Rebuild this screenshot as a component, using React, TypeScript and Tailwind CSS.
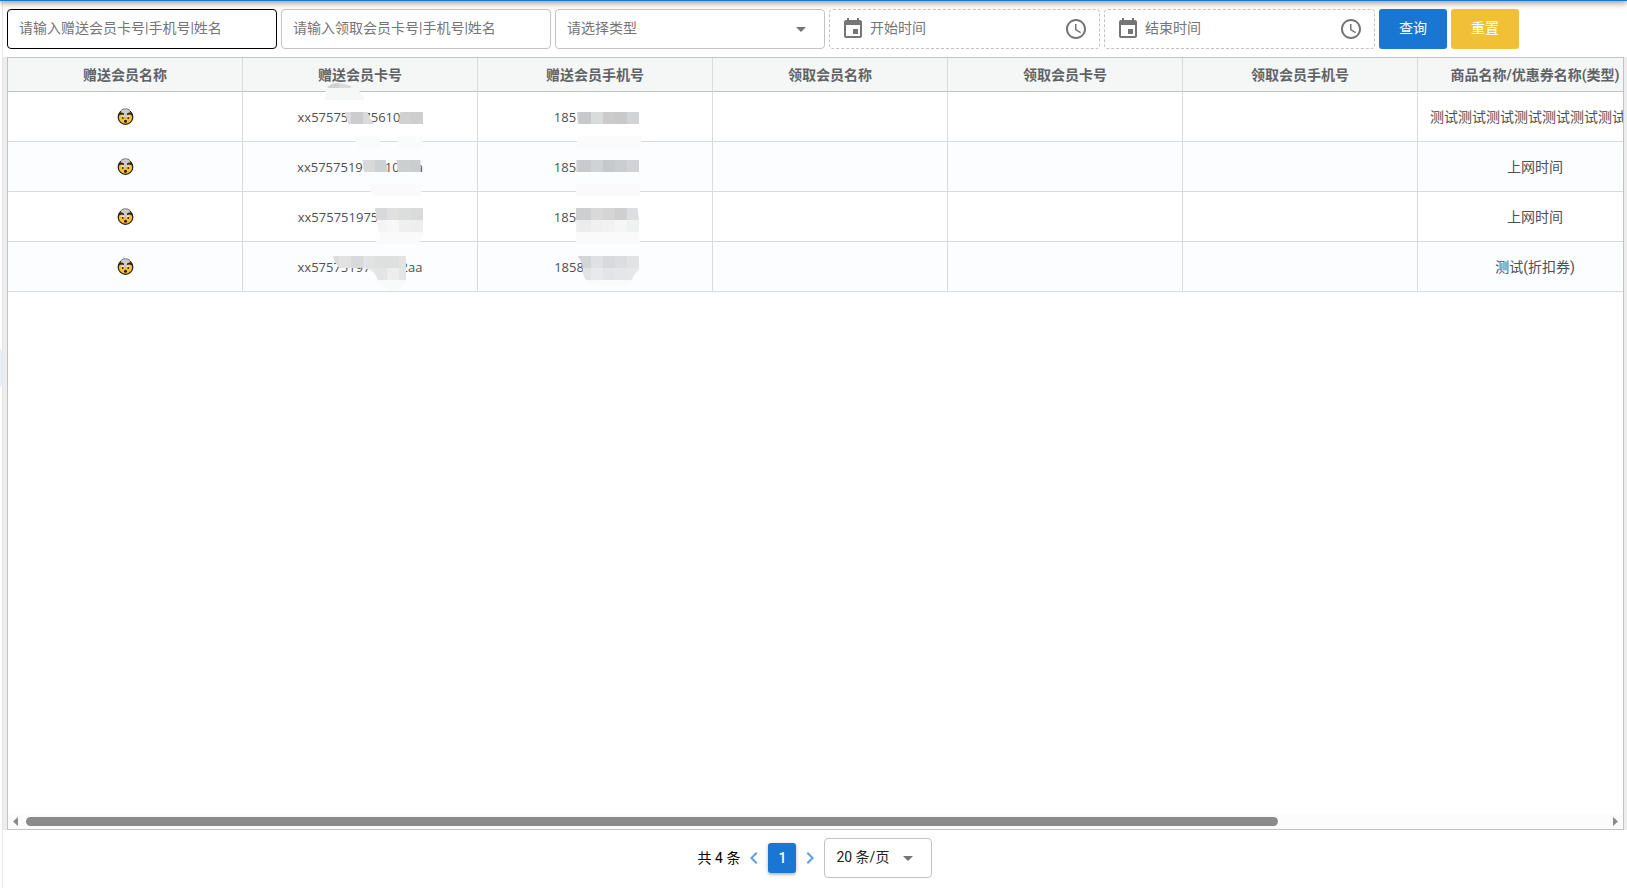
import { useState, type ReactNode } from "react";
import {
  MdAccessTime,
  MdArrowDropDown,
  MdChevronLeft,
  MdChevronRight,
  MdEvent,
} from "react-icons/md";
import { clsx } from "clsx";

// a number stands for a masked stretch of that width, in px
type Masked = (string | number)[];

type Row = {
  id: number;
  card: Masked;
  phone: Masked;
  goods: string;
};

const columns = [
  "赠送会员名称",
  "赠送会员卡号",
  "赠送会员手机号",
  "领取会员名称",
  "领取会员卡号",
  "领取会员手机号",
  "商品名称/优惠券名称(类型)",
];

const rows: Row[] = [
  {
    id: 1,
    card: ["xx57575", 15, "75610", 22],
    phone: ["185", 60],
    goods: "测试测试测试测试测试测试测试测试",
  },
  {
    id: 2,
    card: ["xx5757519", 22, "10", 16, "a"],
    phone: ["185", 60],
    goods: "上网时间",
  },
  { id: 3, card: ["xx575751975", 44], phone: ["185", 60], goods: "上网时间" },
  {
    id: 4,
    card: ["xx57575197", 30, "2aa"],
    phone: ["1858", 52],
    goods: "测试(折扣券)",
  },
];

const fieldClass =
  "h-10 w-full rounded border bg-white text-sm text-[#424242] outline-none placeholder:text-[#757575]";

function TextField({ label, active }: { label: string; active?: boolean }) {
  return (
    <input
      type="text"
      aria-label={label}
      placeholder={label}
      className={clsx(
        fieldClass,
        "px-[11px] pb-0.5",
        active ? "border-black" : "border-[#c2c2c2]",
      )}
    />
  );
}

function DateField({ label }: { label: string }) {
  return (
    <label className="flex h-10 w-full items-center gap-[5px] rounded border border-dashed border-[#c2c2c2] px-[11px]">
      <MdEvent className="size-6 shrink-0 text-[#757575]" />
      <input
        type="text"
        aria-label={label}
        placeholder={label}
        className="h-full min-w-0 flex-1 bg-transparent pb-0.5 text-sm outline-none placeholder:text-[#757575]"
      />
      <MdAccessTime className="size-6 shrink-0 text-[#757575]" />
    </label>
  );
}

function Field({ wide, children }: { wide?: boolean; children: ReactNode }) {
  return (
    <div className={clsx("relative min-w-0", wide ? "w-[271px]" : "w-[270px]")}>
      {children}
    </div>
  );
}

function MaskedText({ parts }: { parts: Masked }) {
  return (
    <span className="inline-flex font-['Open_Sans','Noto_Sans_CJK_SC',sans-serif] text-[13px] leading-5">
      {parts.map((part, i) =>
        typeof part === "string" ? (
          <span key={i}>{part}</span>
        ) : (
          <span key={i} style={{ width: part }} />
        ),
      )}
    </span>
  );
}

function Face() {
  return (
    <svg viewBox="0 0 34 34" className="size-[17px]" aria-hidden="true">
      <circle cx="17" cy="18" r="14.6" fill="#fcc02e" stroke="#1c1c1c" strokeWidth="2.4" />
      <path d="M9 9 Q6 4 11 3 Q14 1 17 2 Q21 1 24 4 Q28 6 24 10 L20 11 V15 L25 18 H9 L14 15 V11Z" fill="#c9cbcd" />
      <path d="M8 5 Q12 1 17 1.4 Q22 1 26 5" fill="none" stroke="#66696b" strokeWidth="1.6" />
      <path d="M4 10 Q9 8 14 11 V14 Q9 12 4 15Z M30 10 Q25 8 20 11 V14 Q25 12 30 15Z" fill="#2b2418" />
      <path d="M9 16.5 H14 M20 16.5 H25" stroke="#f5f5f5" strokeWidth="2" />
      <rect x="10" y="18" width="3" height="4" fill="#4a3510" />
      <rect x="21" y="18" width="3" height="4" fill="#4a3510" />
      <ellipse cx="17" cy="26.5" rx="3" ry="3.2" fill="#1c1c1c" />
    </svg>
  );
}

// mosaic blocks as [x, y, fill]; every block is 36 units wide and high
const blobs: { clip: string; blocks: [number, number, string][] }[] = [
  {
    clip: "M134 60 Q132 10 172 9 Q240 16 254 60Z",
    blocks: [
      [105, -12, "#d0d2d2"], [141, -12, "#d0d2d2"], [177, -12, "#d9dbdb"], [213, -12, "#f4f6f6"],
      [105, 24, "#f6f8f8"], [141, 24, "#f6f8f8"], [177, 24, "#f6f8f8"], [213, 24, "#f6f8f8"], [249, 24, "#f6f8f8"],
    ],
  },
  {
    clip: "M194 96 H262 Q270 116 282 132 H205Z",
    blocks: [[177, 96, "#dcdcde"], [213, 96, "#cccccf"], [249, 96, "#dadadb"]],
  },
  {
    clip: "M361 96 H429 V132 H356Z",
    blocks: [[321, 96, "#d6d6d6"], [357, 96, "#d0d0d1"], [393, 96, "#cececf"]],
  },
  {
    clip: "M222 168 H296 L304 204 H234Z M355 168 H429 L425 204 H350Z",
    blocks: [
      [213, 168, "#fafbfb"], [249, 168, "#fafbfb"], [285, 168, "#fafbfb"],
      [321, 168, "#fafbfb"], [357, 168, "#fafbfb"], [393, 168, "#fafbfb"],
    ],
  },
  {
    clip: "M247 240 H317 L324 276 H252Z M349 240 H422 V276 H354Z",
    blocks: [
      [213, 240, "#d8dada"], [249, 240, "#d8dada"], [285, 240, "#cdd1d3"],
      [321, 240, "#d2d4d4"], [357, 240, "#cbcfd0"], [393, 240, "#c9cdce"],
    ],
  },
  {
    clip: "M268 312 H424 V348 H276Z",
    blocks: [
      [249, 312, "#fafafa"], [285, 312, "#fafafa"], [321, 312, "#fafafa"], [357, 312, "#fafafa"], [393, 312, "#fafafa"],
    ],
  },
  {
    clip: "M285 384 H429 V456 Q426 480 412 492 H258 Q300 486 302 474 Q290 440 285 384Z",
    blocks: [
      [285, 384, "#d8d9da"], [321, 384, "#e0e0df"], [357, 384, "#dcdddd"], [393, 384, "#d9dada"],
      [285, 420, "#f4f4f4"], [321, 420, "#f7f7f7"], [357, 420, "#efefef"], [393, 420, "#eeeeee"],
      [249, 456, "#fafafa"], [285, 456, "#fafafa"], [321, 456, "#fafafa"], [357, 456, "#fafafa"], [393, 456, "#fafafa"],
    ],
  },
  {
    clip: "M159 528 H378 V600 Q368 632 334 634 Q300 622 286 584 Q276 568 250 564 H178 Q162 548 159 528Z",
    blocks: [
      [141, 528, "#dcdcde"], [177, 528, "#e2e2e2"], [213, 528, "#d8d9db"], [249, 528, "#e1e2e2"],
      [285, 528, "#dedfdf"], [321, 528, "#dedfdf"], [357, 528, "#e2e3e3"],
      [249, 564, "#e6e7e8"], [285, 564, "#e3e4e5"], [321, 564, "#ededed"], [357, 564, "#e4e5e6"],
      [285, 600, "#f9fafa"], [321, 600, "#f9fafa"], [357, 600, "#f9fafa"],
    ],
  },
  {
    clip: "M890 96 H1077 V132 H894Z",
    blocks: [
      [861, 96, "#d4d4d5"], [897, 96, "#c7c8ca"], [933, 96, "#d9dcdb"], [969, 96, "#cbcbcc"],
      [1005, 96, "#c9c9c9"], [1041, 96, "#d3d4d5"],
    ],
  },
  {
    clip: "M892 168 H1085 L1082 204 H892Z M888 312 H1080 V348 H888Z",
    blocks: [
      [861, 168, "#fafbfa"], [897, 168, "#fafbfa"], [933, 168, "#fafbfa"], [969, 168, "#fafbfa"],
      [1005, 168, "#fafbfa"], [1041, 168, "#fafbfa"], [1077, 168, "#fafbfa"],
      [861, 312, "#fafafa"], [897, 312, "#fafafa"], [933, 312, "#fafafa"], [969, 312, "#fafafa"],
      [1005, 312, "#fafafa"], [1041, 312, "#fafafa"], [1077, 312, "#fafafa"],
    ],
  },
  {
    clip: "M889 240 H1077 V276 H889Z",
    blocks: [
      [861, 240, "#cdcfd1"], [897, 240, "#c9cacd"], [933, 240, "#d0d3d4"], [969, 240, "#c6c9cb"],
      [1005, 240, "#cbcecf"], [1041, 240, "#d1d4d6"],
    ],
  },
  {
    clip: "M888 384 H1073 L1077 420 V456 L1082 492 H888Z",
    blocks: [
      [861, 384, "#cfd0d1"], [897, 384, "#cecfd0"], [933, 384, "#d9d9d9"], [969, 384, "#d5d5d5"],
      [1005, 384, "#cfcfcf"], [1041, 384, "#dcdedf"],
      [861, 420, "#efefef"], [897, 420, "#ececec"], [933, 420, "#f0f0f0"], [969, 420, "#f2f2f2"],
      [1005, 420, "#f6f6f5"], [1041, 420, "#f0f2f1"],
      [861, 456, "#fafafa"], [897, 456, "#fafafa"], [933, 456, "#fafafa"], [969, 456, "#fafafa"],
      [1005, 456, "#fafafa"], [1041, 456, "#fafafa"], [1077, 456, "#fafafa"],
    ],
  },
  {
    clip: "M893 528 H1077 V570 Q1062 580 1056 600 Q1040 618 1000 618 Q940 620 918 600 Q904 580 909 560 Q902 540 893 528Z",
    blocks: [
      [861, 528, "#d7d8da"], [897, 528, "#d4d5d8"], [933, 528, "#dfe0e2"], [969, 528, "#d8d9dc"],
      [1005, 528, "#dcdddf"], [1041, 528, "#e2e3e4"],
      [897, 564, "#e2e3e5"], [933, 564, "#e8e9eb"], [969, 564, "#e3e4e6"], [1005, 564, "#e5e6e8"], [1041, 564, "#e6e7e8"],
      [897, 600, "#f9fafa"], [933, 600, "#f9fafa"], [969, 600, "#f9fafa"], [1005, 600, "#f9fafa"], [1041, 600, "#f9fafa"],
    ],
  },
];

function Mosaic() {
  return (
    <svg
      viewBox="0 0 1140 660"
      shapeRendering="crispEdges"
      className="pointer-events-none absolute top-[22px] left-[272px] h-[220px] w-[380px]"
      aria-hidden="true"
    >
      {blobs.map((blob, i) => (
        <g key={i} clipPath={`url(#blob-${i})`}>
          <clipPath id={`blob-${i}`}>
            <path d={blob.clip} />
          </clipPath>
          {blob.blocks.map(([x, y, fill]) => (
            <rect key={`${x}-${y}`} x={x} y={y} width="36" height="36" fill={fill} />
          ))}
        </g>
      ))}
    </svg>
  );
}

function GiftTable() {
  const cell =
    "h-[50px] overflow-hidden border-r border-b border-[#d9dcde] px-3 text-center whitespace-nowrap";

  return (
    <div className="relative min-h-0 flex-1 overflow-hidden">
      <table className="w-[1645px] table-fixed border-separate border-spacing-0 text-sm text-[#4f5052]">
        <thead>
          <tr className="bg-[#f5f7f7]">
            {columns.map((column) => (
              <th
                key={column}
                className="h-[34px] w-[235px] border-r border-b border-r-[#d9dcde] border-b-[#bdc3c7] font-bold whitespace-nowrap text-[#606266]"
              >
                {column}
              </th>
            ))}
          </tr>
        </thead>
        <tbody>
          {rows.map((row) => (
            <tr key={row.id} className="even:bg-[#fcfdfe]">
              <td className={cell}>
                <span className="flex justify-center" role="img" aria-label="头像">
                  <Face />
                </span>
              </td>
              <td className={cell}>
                <MaskedText parts={row.card} />
              </td>
              <td className={cell}>
                <MaskedText parts={row.phone} />
              </td>
              <td className={cell} />
              <td className={cell} />
              <td className={cell} />
              <td className={cell}>{row.goods}</td>
            </tr>
          ))}
        </tbody>
      </table>
      <Mosaic />
    </div>
  );
}

function ScrollBar() {
  return (
    <div className="flex h-[15px] items-center gap-2 bg-[#fcfcfc] px-[5px]">
      <svg viewBox="0 0 5 9" className="h-[9px] w-[5px]" fill="#8b8b8b" aria-hidden="true">
        <path d="M5 0v9L0 4.5z" />
      </svg>
      <div className="flex-1">
        <div className="h-[9px] w-[79.3%] rounded-full bg-[#8b8b8b]" />
      </div>
      <svg viewBox="0 0 5 9" className="h-[9px] w-[5px]" fill="#8b8b8b" aria-hidden="true">
        <path d="M0 0v9l5-4.5z" />
      </svg>
    </div>
  );
}

export default function App() {
  const [type, setType] = useState("");
  const [pageSize, setPageSize] = useState("20");

  return (
    <div className="flex h-screen overflow-hidden bg-white font-[Roboto,'Noto_Sans_CJK_SC',sans-serif]">
      <div className="flex w-[3px] shrink-0 flex-col border-r border-[#e6e6e6] pt-[199px]">
        <div className="mt-[150px] h-[38px] bg-[#e8f0fd]" />
      </div>
      <main className="relative flex min-w-0 flex-1 flex-col">
        {/* lower edge of the app header, with its elevation shadow */}
        <div className="pointer-events-none absolute -top-[49px] right-0 -left-[3px] h-[50px] bg-[#1976d2] shadow-[0_2px_4px_-1px_rgba(0,0,0,0.2),0_4px_5px_rgba(0,0,0,0.14),0_1px_10px_rgba(0,0,0,0.12)]" />
        <form
          className="flex gap-1 px-1 pt-[9px] pb-2"
          onSubmit={(e) => e.preventDefault()}
        >
          <Field>
            <TextField label="请输入赠送会员卡号|手机号|姓名" active />
          </Field>
          <Field>
            <TextField label="请输入领取会员卡号|手机号|姓名" />
          </Field>
          <Field>
            <select
              aria-label="请选择类型"
              value={type}
              onChange={(e) => setType(e.target.value)}
              className="h-10 w-full appearance-none rounded border border-[#c2c2c2] bg-white px-[11px] pb-0.5 text-sm text-[#757575] outline-none"
            >
              <option value="">请选择类型</option>
              <option value="time">上网时间</option>
              <option value="coupon">折扣券</option>
            </select>
            <MdArrowDropDown className="pointer-events-none absolute top-2 right-3 size-6 text-[#757575]" />
          </Field>
          <Field wide>
            <DateField label="开始时间" />
          </Field>
          <Field wide>
            <DateField label="结束时间" />
          </Field>
          <button
            type="submit"
            className="relative h-10 w-[68px] shrink-0 rounded-[3px] bg-[#1976d2] pb-0.5 text-sm text-white"
          >
            查询
          </button>
          <button
            type="reset"
            className="relative h-10 w-[68px] shrink-0 rounded-[3px] bg-[#f2c037] pb-0.5 text-sm text-white"
          >
            重置
          </button>
        </form>

        <div className="flex min-h-0 flex-1 bg-[#ededed] pr-[3px] pl-1">
          <div className="flex min-w-0 flex-1 flex-col border border-[#bdc3c7] bg-white">
            <GiftTable />
            <ScrollBar />
          </div>
        </div>

        <nav className="flex items-center justify-center pt-2 pb-[10px] text-sm text-black">
          <span>共 4 条</span>
          <button type="button" aria-label="上一页" className="ml-0.5 text-[#5e9fe0]">
            <MdChevronLeft className="size-6" />
          </button>
          <button
            type="button"
            className="mx-0.5 h-[30px] w-7 rounded-[3px] bg-[#1976d2] font-medium text-white shadow-[0_1px_5px_rgba(0,0,0,0.2),0_2px_2px_rgba(0,0,0,0.14)]"
          >
            1
          </button>
          <button type="button" aria-label="下一页" className="mr-0.5 text-[#5e9fe0]">
            <MdChevronRight className="size-6" />
          </button>
          <div className="relative w-[108px]">
            <select
              aria-label="每页条数"
              value={pageSize}
              onChange={(e) => setPageSize(e.target.value)}
              className="h-10 w-full appearance-none rounded border border-[#c2c2c2] bg-white px-[11px] pb-0.5 text-sm text-[#212121] outline-none"
            >
              <option value="20">20 条/页</option>
              <option value="50">50 条/页</option>
            </select>
            <MdArrowDropDown className="pointer-events-none absolute top-2 right-3 size-6 text-[#757575]" />
          </div>
        </nav>
      </main>
    </div>
  );
}
